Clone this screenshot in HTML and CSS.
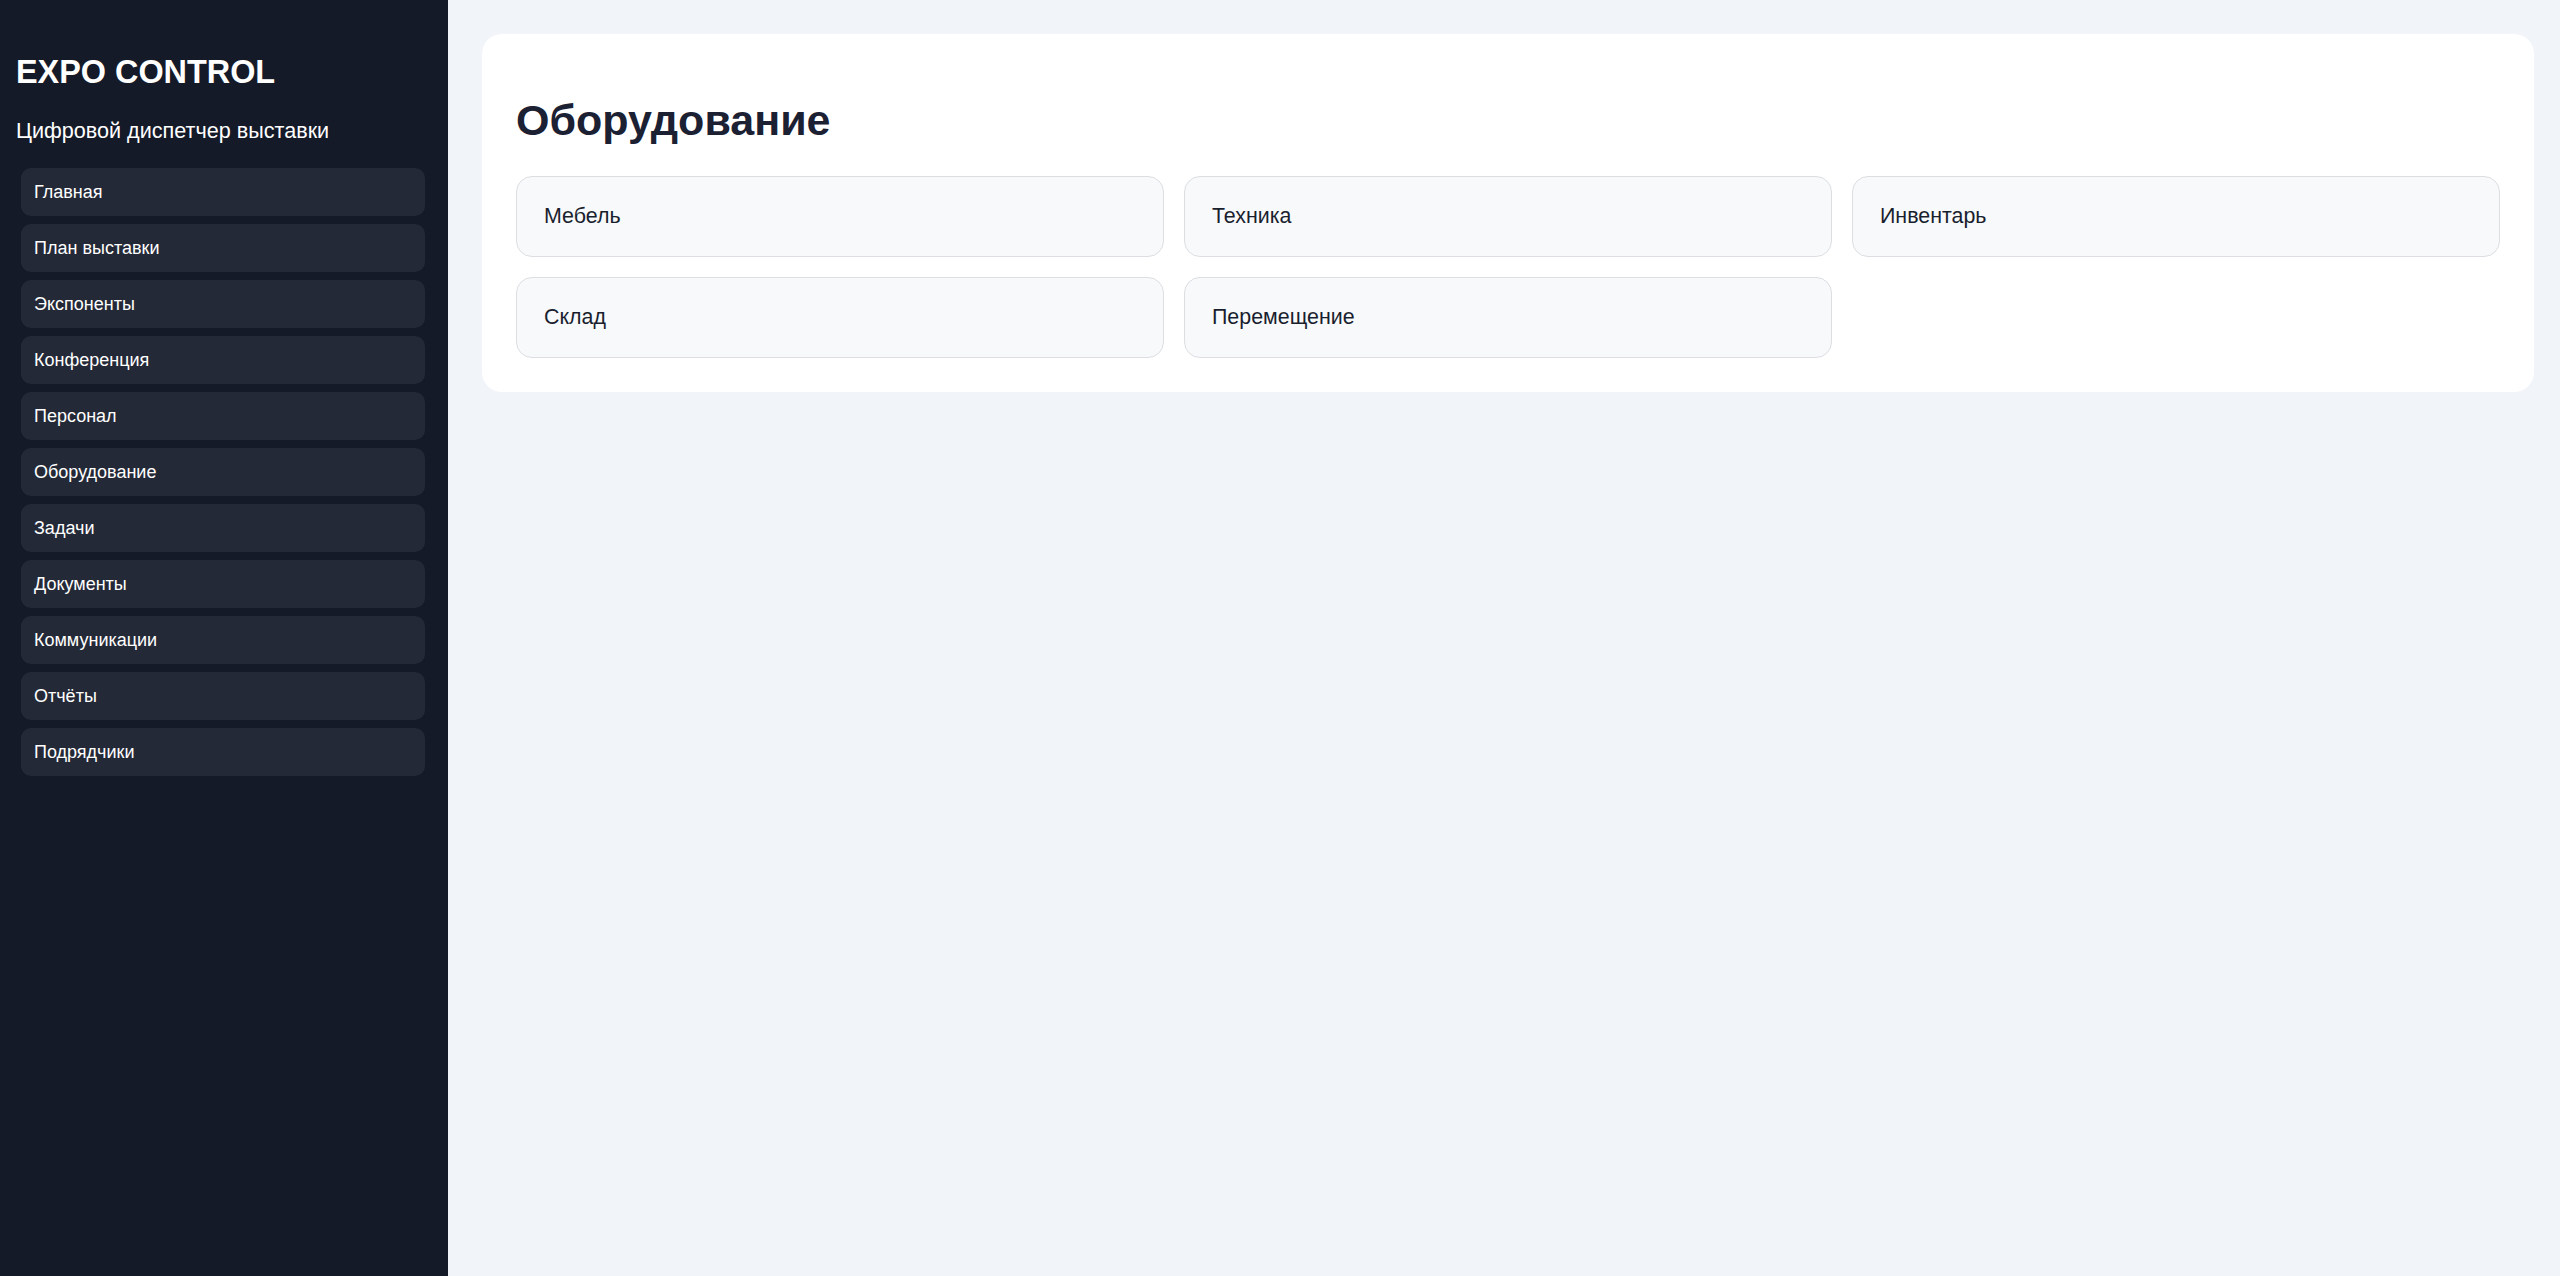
FILE: index.html
```html
<!DOCTYPE html>
<html lang="ru">
<head>
<meta charset="utf-8">
<title>EXPO CONTROL — Оборудование</title>
<link rel="stylesheet" href="styles.css">
</head>
<body>
<aside class="sidebar">
  <div class="brand">EXPO CONTROL</div>
  <div class="tagline">Цифровой диспетчер выставки</div>
  <nav class="nav">
    <a class="nav-item">Главная</a>
    <a class="nav-item">План выставки</a>
    <a class="nav-item">Экспоненты</a>
    <a class="nav-item">Конференция</a>
    <a class="nav-item">Персонал</a>
    <a class="nav-item">Оборудование</a>
    <a class="nav-item">Задачи</a>
    <a class="nav-item">Документы</a>
    <a class="nav-item">Коммуникации</a>
    <a class="nav-item">Отчёты</a>
    <a class="nav-item">Подрядчики</a>
  </nav>
</aside>
<main class="main">
  <section class="card">
    <h1 class="title">Оборудование</h1>
    <div class="grid">
      <div class="tile">Мебель</div>
      <div class="tile">Техника</div>
      <div class="tile">Инвентарь</div>
      <div class="tile">Склад</div>
      <div class="tile">Перемещение</div>
    </div>
  </section>
</main>
</body>
</html>
```

FILE: styles.css
```css
html, body {
  margin: 0;
  padding: 0;
}

body {
  display: flex;
  min-height: 100vh;
  background: #f1f4f9;
  font-family: "Liberation Sans", Arial, sans-serif;
  color: #1c2233;
}

.sidebar {
  width: 448px;
  flex: 0 0 448px;
  box-sizing: border-box;
  background: #151a28;
  color: #ffffff;
  padding: 54px 16px 0 16px;
}

.brand {
  font-size: 32.4px;
  font-weight: 700;
  line-height: 37px;
}

.tagline {
  font-size: 21.6px;
  line-height: 25px;
  margin: 27px 0 25px 0;
}

.nav {
  display: flex;
  flex-direction: column;
  gap: 8px;
  padding: 0 7px 0 5px;
}

.nav-item {
  display: flex;
  align-items: center;
  height: 48px;
  box-sizing: border-box;
  padding: 0 12px 0 13px;
  border-radius: 10px;
  background: #242937;
  color: #ffffff;
  font-size: 18px;
  line-height: 20.5px;
  text-decoration: none;
}

.main {
  flex: 1 1 auto;
  padding: 34px 26px 0 34px;
  box-sizing: border-box;
}

.card {
  background: #ffffff;
  border-radius: 20px;
  padding: 34px 34px 34px 34px;
}

.title {
  font-size: 43px;
  line-height: 49px;
  font-weight: 700;
  margin: 28px 0 31px 0;
  color: #1b2132;
}

.grid {
  display: grid;
  grid-template-columns: repeat(3, 1fr);
  gap: 20px;
}

.tile {
  background: #f8f9fb;
  border: 1px solid #dcdee2;
  border-radius: 16px;
  padding: 27px 26px 28px 27px;
  font-size: 21.4px;
  line-height: 24px;
  color: #1a1f2e;
}
```
